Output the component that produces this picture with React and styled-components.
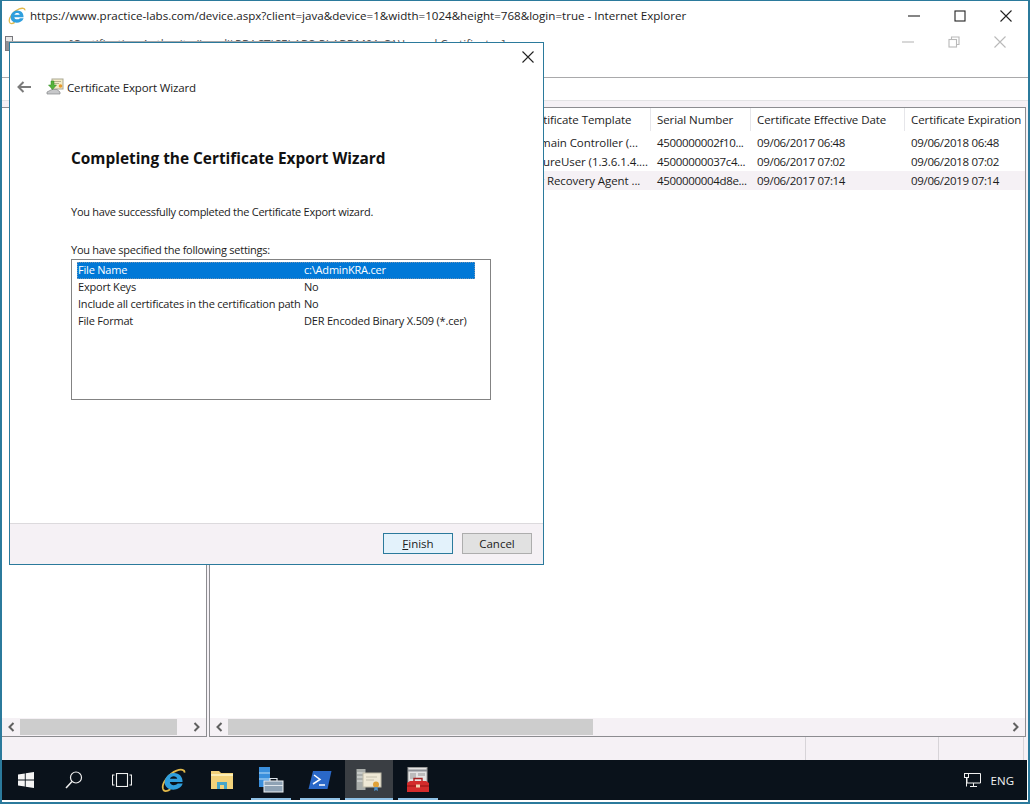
import React from 'react';
import styled, { createGlobalStyle } from 'styled-components';

const GlobalStyle = createGlobalStyle`
  html, body {
    margin: 0;
    padding: 0;
    background: #fff;
  }
  * {
    box-sizing: border-box;
  }
`;

const FONT = `"Open Sans", "Noto Sans", "Liberation Sans", sans-serif`;
const TEAL = '#2b7a9c';
const LAVENDER = '#f5f1f5';
const PANE_LINE = '#8c8c90';
const COLUMNS = '309px 132px 100px 154px 1fr';

const Shell = styled.div`
  position: relative;
  width: 1030px;
  height: 804px;
  overflow: hidden;
  display: flex;
  flex-direction: column;
  background: #fff;
  border: 1px solid ${TEAL};
  border-width: 1px 2px 2px 2px;
  font-family: ${FONT};
  font-size: 11.5px;
  color: #1c1c1c;
`;

const TitleBar = styled.div`
  height: 31px;
  flex: none;
  display: flex;
  align-items: center;
  padding: 0 0 2px 6px;
  gap: 4px;
`;

const TitleText = styled.div`
  flex: 1;
  font-size: 11.6px;
  white-space: nowrap;
`;

const Controls = styled.div`
  display: flex;
  margin-right: ${p => p.$right || 0}px;
  color: ${p => p.$color};
`;

const ControlButton = styled.div`
  width: 46px;
  height: 24px;
  display: flex;
  align-items: center;
  justify-content: center;
`;

const InnerChrome = styled.div`
  height: 46px;
  flex: none;
  display: flex;
  align-items: flex-start;
  border-bottom: 1px solid #a9a9ab;
`;

const InnerTitle = styled.div`
  flex: 1;
  display: flex;
  align-items: flex-start;
  padding: 4px 0 0 3px;
  gap: 56px;
  font-size: 11.7px;
  white-space: nowrap;
  color: #555;
`;

const MmcIcon = styled.div`
  width: 8px;
  height: 15px;
  background: linear-gradient(#e8e8e8 30%, #8f8f95 30%);
  border: 1px solid #77777c;
`;

const InnerControls = styled(Controls)`
  margin-top: -2px;
`;

const MenuStrip = styled.div`
  height: 23px;
  flex: none;
  border-bottom: 1px solid #e3e3e5;
`;

const Workspace = styled.div`
  flex: 1;
  min-height: 0;
  display: flex;
  gap: 2px;
  padding: 6px 2px 0 0;
  background: ${LAVENDER};
`;

const Pane = styled.div`
  display: flex;
  flex-direction: column;
  background: #fff;
  border: 1px solid ${PANE_LINE};
  border-left-width: ${p => (p.$open ? 0 : 1)}px;
  width: ${p => (p.$width ? `${p.$width}px` : 'auto')};
  flex: ${p => (p.$width ? 'none' : 1)};
`;

const TableHead = styled.div`
  height: 23px;
  flex: none;
  display: grid;
  grid-template-columns: ${COLUMNS};
  align-items: stretch;
`;

const HeadCell = styled.div`
  display: flex;
  align-items: center;
  padding-left: 6px;
  letter-spacing: -0.08px;
  white-space: nowrap;
  overflow: hidden;
  border-right: ${p => (p.$last ? 'none' : '1px solid #e6e6ea')};
`;

const TableBody = styled.div`
  flex: 1;
  padding-top: 2px;
`;

const Row = styled.div`
  height: 19px;
  display: grid;
  grid-template-columns: ${COLUMNS};
  align-items: center;
  background: ${p => (p.$active ? LAVENDER : 'transparent')};
`;

const Cell = styled.div`
  padding-left: 6px;
  letter-spacing: ${p => (p.$digits ? '-0.33px' : '-0.08px')};
  white-space: nowrap;
  overflow: hidden;
`;

const Scrollbar = styled.div`
  height: 18px;
  flex: none;
  display: flex;
  align-items: center;
  background: ${LAVENDER};
`;

const ScrollArrow = styled.div`
  width: 18px;
  height: 18px;
  flex: none;
  display: flex;
  align-items: center;
  justify-content: center;
  color: #606060;
`;

const ScrollTrack = styled.div`
  flex: 1;
  height: 16px;
`;

const ScrollThumb = styled.div`
  height: 16px;
  width: ${p => p.$width}px;
  background: #cdcdcd;
`;

const StatusBar = styled.div`
  height: 23px;
  flex: none;
  display: grid;
  grid-template-columns: 804px 133px 85px 1fr;
  background: ${LAVENDER};
`;

const StatusCell = styled.div`
  border-right: 1px solid #d7d4d8;
`;

const Taskbar = styled.div`
  height: 40px;
  flex: none;
  display: flex;
  align-items: stretch;
  background: #0a121b;
  margin: 0 1px 2px 0;
`;

const TaskGroup = styled.div`
  display: flex;
  gap: ${p => p.$gap || 0}px;
  padding-left: ${p => p.$left || 0}px;
`;

const TaskButton = styled.div`
  position: relative;
  width: 48px;
  height: 40px;
  display: flex;
  align-items: center;
  justify-content: center;
  background: ${p => (p.$active ? '#3a3e43' : 'transparent')};
  &::after {
    content: '';
    display: ${p => (p.$running ? 'block' : 'none')};
    position: absolute;
    bottom: 0;
    left: ${p => (p.$active ? 0 : 4)}px;
    right: ${p => (p.$active ? 0 : 4)}px;
    height: 2px;
    background: #8fc1e6;
  }
`;

const Tray = styled.div`
  margin-left: auto;
  display: flex;
  align-items: center;
  gap: 10px;
  padding-right: 13px;
  color: #f2f2f2;
  font-size: 11.5px;
`;

const Dialog = styled.div`
  position: absolute;
  left: 7px;
  top: 41px;
  width: 535px;
  height: 523px;
  display: flex;
  flex-direction: column;
  background: #fff;
  border: 1px solid ${TEAL};
  &::before {
    content: '';
    position: absolute;
    left: -2px;
    top: -2px;
    width: 386px;
    height: 1px;
    background: #a8a8aa;
  }
`;

const DialogClose = styled.div`
  height: 30px;
  flex: none;
  display: flex;
  justify-content: flex-end;
  align-items: center;
  padding: 0 9px 3px 0;
  color: #222;
`;

const DialogNav = styled.div`
  height: 28px;
  flex: none;
  display: flex;
  align-items: center;
  padding-left: 7px;
`;

const BackButton = styled.div`
  width: 14px;
  display: flex;
  margin-right: 15px;
  color: #7b7b7b;
`;

const WizardName = styled.div`
  margin-left: 3px;
  font-size: 11.5px;
  letter-spacing: -0.16px;
  color: #222;
`;

const DialogBody = styled.div`
  flex: 1;
  padding: 0 52px 0 61px;
`;

const Heading = styled.h1`
  margin: 47px 0 0;
  font-size: 15.4px;
  line-height: 22px;
  font-weight: 700;
  color: #111;
`;

const Message = styled.p`
  margin: ${p => p.$top}px 0 0;
  line-height: 16px;
  font-size: 11px;
  letter-spacing: -0.27px;
`;

const SettingsBox = styled.div`
  margin-top: 1px;
  height: 141px;
  padding: 2px 15px 0 5px;
  border: 1px solid #838383;
`;

const SettingRow = styled.div`
  height: 17px;
  display: grid;
  grid-template-columns: 226px 1fr;
  align-items: center;
  padding: 0 0 2px 1px;
  font-size: 11px;
  letter-spacing: -0.2px;
  white-space: nowrap;
  color: ${p => (p.$selected ? '#fff' : 'inherit')};
  background: ${p => (p.$selected ? '#0078d7' : 'transparent')};
  outline: ${p => (p.$selected ? '1px dotted #6f93b5' : 'none')};
  outline-offset: -1px;
`;

const DialogFooter = styled.div`
  height: 41px;
  flex: none;
  display: flex;
  justify-content: flex-end;
  gap: 9px;
  padding: 9px 11px 0 0;
  background: ${LAVENDER};
  border-top: 1px solid #dcdadd;
`;

const WizardButton = styled.button`
  width: 70px;
  height: 21px;
  padding: 0;
  font-family: inherit;
  font-size: 11.5px;
  color: #1c1c1c;
  background: ${p => (p.$primary ? '#e3f2fb' : '#e1e1e1')};
  border: 1px solid ${p => (p.$primary ? TEAL : '#adadad')};
`;

const Glyph = ({ size = 12, children, stroke = 'currentColor', width = 1.1 }) => (
  <svg width={size} height={size} viewBox="0 0 12 12" fill="none" stroke={stroke} strokeWidth={width}>
    {children}
  </svg>
);

const CloseGlyph = () => (
  <Glyph>
    <path d="M0.5 0.5 L11.5 11.5 M11.5 0.5 L0.5 11.5" />
  </Glyph>
);

const MinGlyph = () => (
  <Glyph>
    <path d="M0 6 H12" />
  </Glyph>
);

const MaxGlyph = () => (
  <Glyph>
    <rect x="1" y="1" width="10" height="10" />
  </Glyph>
);

const RestoreGlyph = () => (
  <Glyph>
    <rect x="1" y="3.5" width="7.5" height="7.5" />
    <path d="M3.5 3.5 V1 H11 V8.5 H8.5" />
  </Glyph>
);

const Chevron = ({ right }) => (
  <svg width="8" height="10" viewBox="0 0 8 10" fill="none" stroke="currentColor" strokeWidth="2">
    <path d={right ? 'M1.5 1 L5.5 5 L1.5 9' : 'M6.5 1 L2.5 5 L6.5 9'} />
  </svg>
);

const BackArrow = () => (
  <svg width="14" height="12" viewBox="0 0 14 12" fill="none" stroke="currentColor" strokeWidth="2">
    <path d="M14 6 H1.5 M6.5 1 L1.5 6 L6.5 11" />
  </svg>
);

const IeLogo = ({ size = 24 }) => (
  <svg width={size} height={size} viewBox="0 0 24 24" fill="none">
    <path d="M2 20 C0 15 8 5 15 2.5 C19 1 23 1.500 22.500 4.500" stroke="#e2b94a" strokeWidth="1.700" />
    <path d="M2 20 C2.500 23 6 22.500 9 20.500" stroke="#e2b94a" strokeWidth="1.700" />
    <path
      d="M19.500 13.500 H8.500 C8.700 16.800 13.500 17.500 16 14.900 H20.800 C18.800 21.500 8.500 23 4.600 17.500 C1.500 12.500 5.500 4.800 12.500 4.800 C17.500 4.800 21 8.500 20.700 13.500 Z M8.600 10.300 H15.600 C15.300 7.100 9.300 7 8.600 10.300 Z"
      fill="#2f9fde"
      fillRule="evenodd"
    />
  </svg>
);

const WizardIcon = () => (
  <svg width="18" height="18" viewBox="0 0 18 18" fill="none">
    <rect x="6" y="1" width="11" height="10" fill="#f4ecc8" stroke="#a9a793" />
    <path d="M8 3.500 H15 M8 5.500 H13" stroke="#b9b48f" />
    <circle cx="14.500" cy="8" r="1.800" fill="#e69a2e" />
    <path d="M1 14 L6 11.500 H11 L14 14 V16 H1 Z" fill="#c7c8ca" stroke="#85878a" strokeWidth="0.700" />
    <path d="M5 3 H8 V7 H10.500 L6.500 11.500 L2.500 7 H5 Z" fill="#56b33a" stroke="#2f8a20" strokeWidth="0.500" />
  </svg>
);

const WindowsLogo = () => (
  <svg width="16" height="16" viewBox="0 0 16 16" fill="#f4f4f4">
    <path d="M0 2.400 L6.800 1.400 V7.500 H0 Z M7.700 1.300 L16 0 V7.500 H7.700 Z M0 8.500 H6.800 V14.600 L0 13.600 Z M7.700 8.500 H16 V16 L7.700 14.700 Z" />
  </svg>
);

const SearchIcon = () => (
  <svg width="18" height="18" viewBox="0 0 18 18" fill="none" stroke="#f0f0f0" strokeWidth="1.200">
    <circle cx="11" cy="6.500" r="5.500" />
    <path d="M7 10.500 L1 17" strokeWidth="1.500" />
  </svg>
);

const TaskViewIcon = () => (
  <svg width="20" height="14" viewBox="0 0 20 14" fill="none" stroke="#f0f0f0" strokeWidth="1.100">
    <rect x="4.500" y="0.500" width="11" height="13" />
    <path d="M2.500 2 H0.500 V12 H2.500 M17.500 2 H19.500 V12 H17.500" />
  </svg>
);

const FolderIcon = () => (
  <svg width="24" height="20" viewBox="0 0 24 20">
    <path d="M1 1 H9 L11 3 H23 V19 H1 Z" fill="#f2d27a" />
    <path d="M1 4 H23 V6 H1 Z" fill="#fbeeb6" />
    <path d="M7 19 V12 H17 V19 H14 V15 H10 V19 Z" fill="#46a6c9" />
  </svg>
);

const ServerManagerIcon = () => (
  <svg width="26" height="26" viewBox="0 0 26 26">
    <rect x="1" y="0" width="11" height="20" fill="#3a8fdc" />
    <path d="M1 6 H12 M1 12 H12" stroke="#bfe0f8" />
    <rect x="6" y="14" width="19" height="11" fill="#8ea2b4" stroke="#eef2f5" />
    <path d="M12 14 V11.500 H19 V14" fill="none" stroke="#dfe6ec" strokeWidth="1.200" />
    <path d="M6 18.500 H25" stroke="#dfe6ec" />
  </svg>
);

const PowerShellIcon = () => (
  <svg width="24" height="20" viewBox="0 0 24 20">
    <path d="M5 1 H23.500 L19.500 19 H0.500 Z" fill="#2a68c8" />
    <path d="M6 5 L12 9.500 L5 14" fill="none" stroke="#fff" strokeWidth="1.500" />
    <path d="M11 15 H17" stroke="#fff" strokeWidth="1.500" />
  </svg>
);

const CertAuthorityIcon = () => (
  <svg width="26" height="24" viewBox="0 0 26 24">
    <rect x="0.500" y="1" width="9" height="21" fill="#a9adaa" />
    <path d="M1 5 H9 M1 9 H9 M1 13 H9" stroke="#e5e7e5" />
    <rect x="7" y="5" width="18" height="14" fill="#efe9d6" stroke="#bdb9a8" />
    <path d="M10 9 H21 M10 12 H18" stroke="#c5c0ad" />
    <circle cx="20" cy="16.500" r="3" fill="#e0a23a" />
    <path d="M18.500 19 L18 23 L20 22 L22 23 L21.500 19 Z" fill="#4e8fc7" />
  </svg>
);

const ToolboxIcon = () => (
  <svg width="24" height="26" viewBox="0 0 24 26">
    <rect x="2" y="0.500" width="19" height="18" fill="#e4e4e4" stroke="#9b9b9b" />
    <path d="M2 3.500 H21" stroke="#8c8f94" strokeWidth="2" />
    <path d="M4 6 H10 V12 H4 Z M12 6 H19 V9 H12 Z" fill="#bcbcbc" />
    <path d="M8 14 V11.500 H16 V14" fill="none" stroke="#a52020" strokeWidth="1.400" />
    <path d="M1 16 L4 14 H20 L23 16 V25 H1 Z" fill="#d32b2b" />
    <path d="M1 19 H23" stroke="#8f1414" />
    <rect x="10" y="17.500" width="4" height="3" fill="#f0d2b0" />
  </svg>
);

const NetworkIcon = () => (
  <svg width="17" height="14" viewBox="0 0 17 14" fill="none" stroke="#f0f0f0" strokeWidth="1">
    <path d="M4.500 0.500 H16.500 V10 H3 V5" />
    <rect x="0.500" y="0.500" width="4" height="4" />
    <path d="M2.500 4.500 V13.500 M9.500 10 V13 M6 13.500 H13" />
  </svg>
);

const certificates = [
  { template: 'Domain Controller (...', serial: '4500000002f10...', from: '09/06/2017 06:48', to: '09/06/2018 06:48' },
  { template: 'SecureUser (1.3.6.1.4....', serial: '45000000037c4...', from: '09/06/2017 07:02', to: '09/06/2018 07:02' },
  { template: 'Key Recovery Agent ...', serial: '4500000004d8e...', from: '09/06/2017 07:14', to: '09/06/2019 07:14', active: true },
];

const settings = [
  ['File Name', 'c:\\AdminKRA.cer', true],
  ['Export Keys', 'No'],
  ['Include all certificates in the certification path', 'No'],
  ['File Format', 'DER Encoded Binary X.509 (*.cer)'],
];

const PaneScroll = ({ thumb }) => (
  <Scrollbar>
    <ScrollArrow>
      <Chevron />
    </ScrollArrow>
    <ScrollTrack>
      <ScrollThumb $width={thumb} />
    </ScrollTrack>
    <ScrollArrow>
      <Chevron right />
    </ScrollArrow>
  </Scrollbar>
);

const App = () => (
  <Shell>
    <GlobalStyle />
    <TitleBar>
      <IeLogo size={18} />
      <TitleText>https://www.practice-labs.com/device.aspx?client=java&amp;device=1&amp;width=1024&amp;height=768&amp;login=true - Internet Explorer</TitleText>
      <Controls $color="#222" $right={-1}>
        <ControlButton><MinGlyph /></ControlButton>
        <ControlButton><MaxGlyph /></ControlButton>
        <ControlButton><CloseGlyph /></ControlButton>
      </Controls>
    </TitleBar>

    <InnerChrome>
      <InnerTitle>
        <MmcIcon />
        <span>[Certification Authority (Local)\PRACTICELABS-PLABDM01-CA\Issued Certificates]</span>
      </InnerTitle>
      <InnerControls $color="#b9b9b9" $right={5}>
        <ControlButton><MinGlyph /></ControlButton>
        <ControlButton><RestoreGlyph /></ControlButton>
        <ControlButton><CloseGlyph /></ControlButton>
      </InnerControls>
    </InnerChrome>
    <MenuStrip />

    <Workspace>
      <Pane $width={205} $open>
        <TableBody />
        <PaneScroll thumb={157} />
      </Pane>
      <Pane>
        <TableHead>
          <HeadCell />
          <HeadCell>Certificate Template</HeadCell>
          <HeadCell>Serial Number</HeadCell>
          <HeadCell>Certificate Effective Date</HeadCell>
          <HeadCell $last>Certificate Expiration</HeadCell>
        </TableHead>
        <TableBody>
          {certificates.map(cert => (
            <Row key={cert.serial} $active={cert.active}>
              <Cell />
              <Cell>{cert.template}</Cell>
              <Cell $digits>{cert.serial}</Cell>
              <Cell $digits>{cert.from}</Cell>
              <Cell $digits>{cert.to}</Cell>
            </Row>
          ))}
        </TableBody>
        <PaneScroll thumb={365} />
      </Pane>
    </Workspace>

    <StatusBar>
      <StatusCell />
      <StatusCell />
      <StatusCell />
    </StatusBar>

    <Taskbar>
      <TaskGroup>
        <TaskButton><WindowsLogo /></TaskButton>
        <TaskButton><SearchIcon /></TaskButton>
        <TaskButton><TaskViewIcon /></TaskButton>
      </TaskGroup>
      <TaskGroup $left={3} $gap={1}>
        <TaskButton><IeLogo size={25} /></TaskButton>
        <TaskButton><FolderIcon /></TaskButton>
        <TaskButton $running><ServerManagerIcon /></TaskButton>
        <TaskButton $running><PowerShellIcon /></TaskButton>
        <TaskButton $running $active><CertAuthorityIcon /></TaskButton>
        <TaskButton $running><ToolboxIcon /></TaskButton>
      </TaskGroup>
      <Tray>
        <NetworkIcon />
        <span>ENG</span>
      </Tray>
    </Taskbar>

    <Dialog>
      <DialogClose><CloseGlyph /></DialogClose>
      <DialogNav>
        <BackButton><BackArrow /></BackButton>
        <WizardIcon />
        <WizardName>Certificate Export Wizard</WizardName>
      </DialogNav>
      <DialogBody>
        <Heading>Completing the Certificate Export Wizard</Heading>
        <Message $top={34}>You have successfully completed the Certificate Export wizard.</Message>
        <Message $top={22}>You have specified the following settings:</Message>
        <SettingsBox>
          {settings.map(([label, value, selected]) => (
            <SettingRow key={label} $selected={selected}>
              <span>{label}</span>
              <span>{value}</span>
            </SettingRow>
          ))}
        </SettingsBox>
      </DialogBody>
      <DialogFooter>
        <WizardButton $primary><u>F</u>inish</WizardButton>
        <WizardButton>Cancel</WizardButton>
      </DialogFooter>
    </Dialog>
  </Shell>
);

export default App;
